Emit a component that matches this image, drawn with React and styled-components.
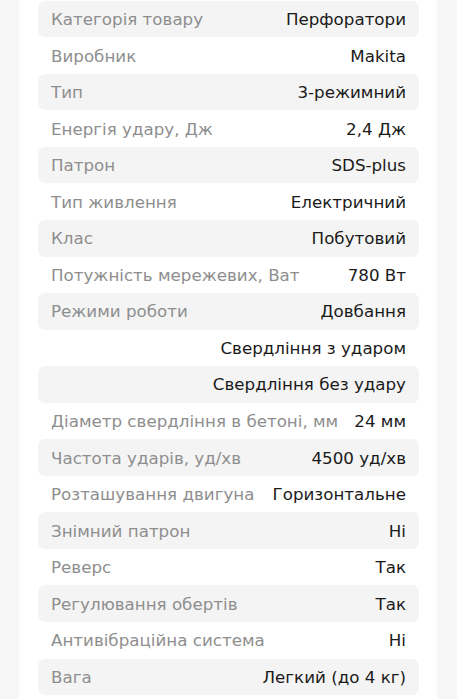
import styled, { createGlobalStyle } from "styled-components";

const specs = [
    ["Категорія товару", "Перфоратори"],
    ["Виробник", "Makita"],
    ["Тип", "3-режимний"],
    ["Енергія удару, Дж", "2,4 Дж"],
    ["Патрон", "SDS-plus"],
    ["Тип живлення", "Електричний"],
    ["Клас", "Побутовий"],
    ["Потужність мережевих, Ват", "780 Вт"],
    ["Режими роботи", "Довбання"],
    ["", "Свердління з ударом"],
    ["", "Свердління без удару"],
    ["Діаметр свердління в бетоні, мм", "24 мм"],
    ["Частота ударів, уд/хв", "4500 уд/хв"],
    ["Розташування двигуна", "Горизонтальне"],
    ["Знімний патрон", "Ні"],
    ["Реверс", "Так"],
    ["Регулювання обертів", "Так"],
    ["Антивібраційна система", "Ні"],
    ["Вага", "Легкий (до 4 кг)"],
];

const App = () => {
    return (
        <Page>
            <GlobalStyle />
            <Panel>
                {specs.map(([label, value], i) => (
                    <Row key={i} $shaded={i % 2 === 0}>
                        <Label>{label}</Label>
                        <Value>{value}</Value>
                    </Row>
                ))}
            </Panel>
        </Page>
    );
};

export default App;

const GlobalStyle = createGlobalStyle`
    html, body {
        margin: 0;
        padding: 0;
        background: #f6f6f6;
    }
    * {
        box-sizing: border-box;
    }
`;

const Page = styled.div`
    width: 457px;
    height: 699px;
    overflow: hidden;
    background: #f6f6f6;
    padding: 0 20px 0 19px;
    font-family: "DejaVu Sans", sans-serif;
`;

const Panel = styled.div`
    background: #fff;
    height: 100%;
    padding: 0.7px 18px 0 19px;
`;

const Row = styled.div`
    height: 36.55px;
    display: flex;
    align-items: center;
    justify-content: space-between;
    gap: 10px;
    padding: 0 13px;
    border-radius: 7px;
    background: ${(p) => (p.$shaded ? "#f4f4f4" : "transparent")};
    font-size: 16.7px;
    white-space: nowrap;
`;

const Label = styled.span`
    color: #8e8e8e;
`;

const Value = styled.span`
    color: #1a1a1a;
    margin-left: auto;
`;
